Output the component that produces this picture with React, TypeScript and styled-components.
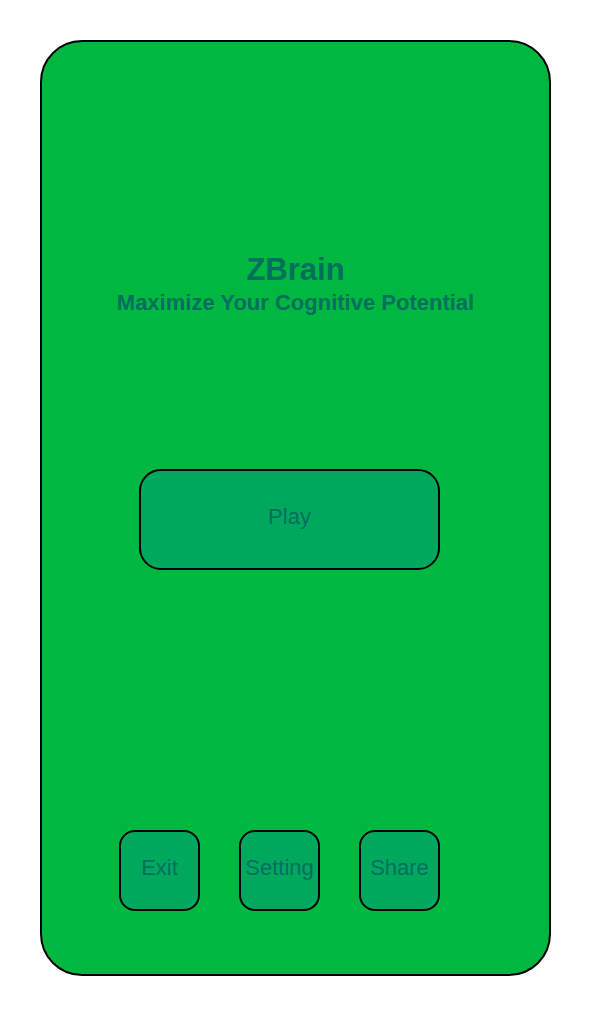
import React from 'react';
import styled, { createGlobalStyle } from 'styled-components';

const GlobalStyle = createGlobalStyle`
  body {
    margin: 0;
    background: #ffffff;
    font-family: "Liberation Sans", Arial, sans-serif;
  }
`;

const Screen = styled.div`
  box-sizing: border-box;
  width: 511px;
  height: 936px;
  margin: 40px 0 0 40px;
  background: #00b83f;
  border: 2px solid #000000;
  border-radius: 42px;
  display: flex;
  flex-direction: column;
  padding-top: 211px;
`;

const Header = styled.div`
  display: flex;
  flex-direction: column;
  align-items: center;
  gap: 4px;
  color: #006f5e;
  font-weight: bold;
  .title {
    font-size: 31px;
    line-height: 34px;
  }
  .subtitle {
    font-size: 22px;
    line-height: 24px;
  }
`;

const Button = styled.button<{ $w: number; $h: number; $r: number }>`
  box-sizing: border-box;
  width: ${(p) => p.$w}px;
  height: ${(p) => p.$h}px;
  border: 2px solid #000000;
  border-radius: ${(p) => p.$r}px;
  background: #00a85e;
  color: #006f5e;
  font-family: "Liberation Sans", Arial, sans-serif;
  font-size: 22px;
  padding: 0 0 5px 0;
  display: flex;
  align-items: center;
  justify-content: center;
  white-space: nowrap;
`;

const PlayWrap = styled.div`
  margin: 154px 0 0 97px;
`;

const BottomRow = styled.div`
  display: flex;
  gap: 39px;
  margin: 260px 0 0 77px;
`;

export default () => {
  return (
    <>
      <GlobalStyle />
      <Screen>
        <Header>
          <div className="title">ZBrain</div>
          <div className="subtitle">Maximize Your Cognitive Potential</div>
        </Header>
        <PlayWrap>
          <Button $w={301} $h={101} $r={22}>Play</Button>
        </PlayWrap>
        <BottomRow>
          <Button $w={81} $h={81} $r={16}>Exit</Button>
          <Button $w={81} $h={81} $r={16}>Setting</Button>
          <Button $w={81} $h={81} $r={16}>Share</Button>
        </BottomRow>
      </Screen>
    </>
  );
};
